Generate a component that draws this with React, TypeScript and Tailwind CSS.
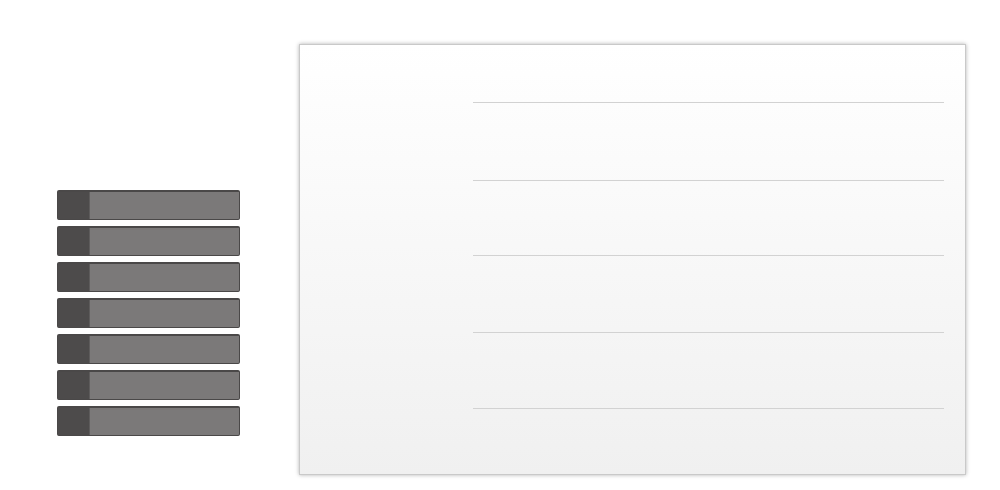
export default function App() {
  const bars = [0, 1, 2, 3, 4, 5, 6];
  const gaps = ["mt-[57px]", "mt-[77px]", "mt-[74px]", "mt-[76px]", "mt-[75px]"];

  return (
    <div className="w-[1000px] h-[490px] bg-white flex font-['Liberation_Sans',sans-serif]">
      <div className="w-[240px] pl-[57px] pt-[190px] flex flex-col gap-[6px]">
        {bars.map((b) => (
          <div
            key={b}
            className="h-[30px] flex border border-t-2 border-[#4a4848] rounded-[2px] bg-[#7b7979]"
          >
            <div className="w-[32px] bg-[#4d4b4b] border-r border-[#5e5c5c]" />
          </div>
        ))}
      </div>

      <div className="ml-[59px] mt-[44px] w-[667px] h-[431px] border border-[#c9c9c9] shadow-[0_0_4px_rgba(0,0,0,0.3)] bg-linear-to-b from-white to-[#f0f0f0] pl-[173px] pr-[21px]">
        {gaps.map((g, i) => (
          <div key={i} className={`${g} h-px bg-[#d2d2d2]`} />
        ))}
      </div>
    </div>
  );
}
